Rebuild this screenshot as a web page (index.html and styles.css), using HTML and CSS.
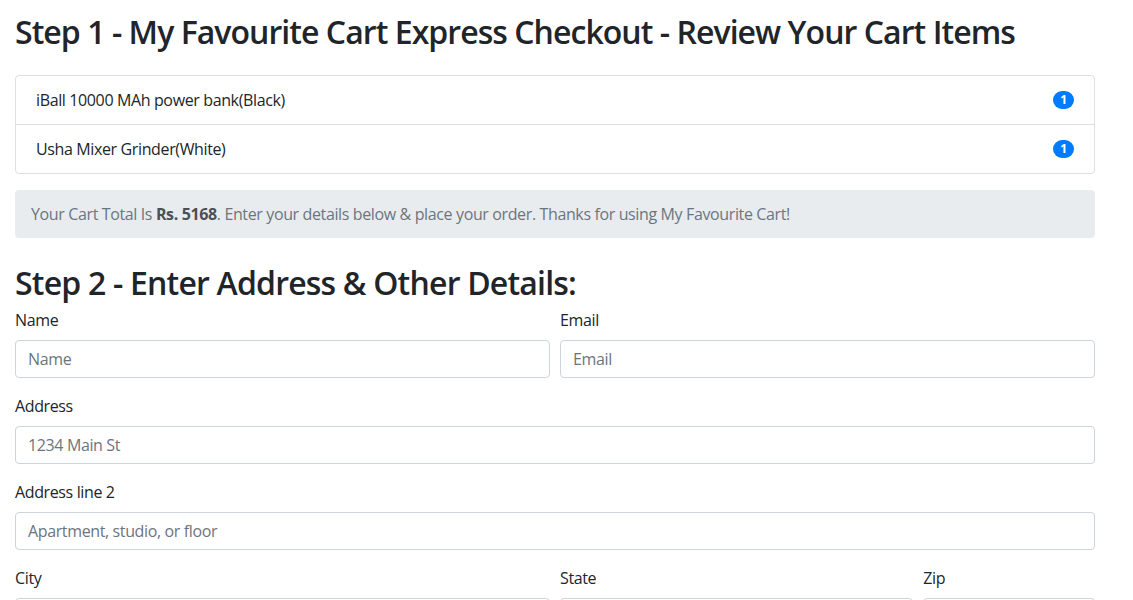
FILE: index.html
```html
<!DOCTYPE html>
<html lang="en">
<head>
<meta charset="utf-8">
<title>My Favourite Cart - Checkout</title>
<link rel="stylesheet" href="styles.css">
</head>
<body>
<div class="container">
  <h2 class="step-title step-one">Step 1 - My Favourite Cart Express Checkout - Review Your Cart Items</h2>
  <ul class="list-group">
    <li class="list-group-item">
      <span>iBall 10000 MAh power bank(Black)</span>
      <span class="badge">1</span>
    </li>
    <li class="list-group-item">
      <span>Usha Mixer Grinder(White)</span>
      <span class="badge">1</span>
    </li>
  </ul>
  <div class="alert">Your Cart Total Is <b>Rs. 5168</b>. Enter your details below &amp; place your order. Thanks for using My Favourite Cart!</div>

  <h2 class="step-title step-two">Step 2 - Enter Address &amp; Other Details:</h2>
  <form class="checkout-form">
    <div class="form-row">
      <div class="form-group col-6">
        <label for="name">Name</label>
        <input class="form-control" id="name" type="text" placeholder="Name">
      </div>
      <div class="form-group col-6">
        <label for="email">Email</label>
        <input class="form-control" id="email" type="email" placeholder="Email">
      </div>
    </div>
    <div class="form-group">
      <label for="address">Address</label>
      <input class="form-control" id="address" type="text" placeholder="1234 Main St">
    </div>
    <div class="form-group">
      <label for="address2">Address line 2</label>
      <input class="form-control" id="address2" type="text" placeholder="Apartment, studio, or floor">
    </div>
    <div class="form-row">
      <div class="form-group col-6">
        <label for="city">City</label>
        <input class="form-control" id="city" type="text">
      </div>
      <div class="form-group col-4">
        <label for="state">State</label>
        <input class="form-control" id="state" type="text">
      </div>
      <div class="form-group col-2">
        <label for="zip">Zip</label>
        <input class="form-control" id="zip" type="text">
      </div>
    </div>
  </form>
</div>
</body>
</html>
```
FILE: styles.css
```css
* { box-sizing: border-box; }
html, body { margin: 0; padding: 0; background: #fff; }
body {
  font-family: "Open Sans", "Noto Sans", "Liberation Sans", sans-serif;
  font-size: 16px;
  line-height: 1.5;
  letter-spacing: -0.37px;
  color: #212529;
}
.container {
  width: 1110px;
  padding: 0 15px;
}
.step-title {
  font-size: 32px;
  font-weight: 600;
  line-height: 1.2;
  letter-spacing: -0.95px;
  margin: 0 0 8px;
  color: #212529;
}
.step-one { margin-top: 13px; margin-bottom: 24px; }
.step-two { margin-top: 26px; margin-bottom: 5px; letter-spacing: -0.8px; }
.list-group {
  list-style: none;
  margin: 0 0 16px;
  padding: 0;
  border: 1px solid rgba(0,0,0,.125);
  border-radius: 4px;
}
.list-group-item {
  display: flex;
  justify-content: space-between;
  align-items: center;
  padding: 12px 20px;
}
.list-group-item + .list-group-item { border-top: 1px solid rgba(0,0,0,.125); }
.badge {
  display: inline-block;
  background: #007bff;
  color: #fff;
  font-size: 12px;
  font-weight: 700;
  line-height: 1;
  letter-spacing: 0;
  padding: 3px 7px;
  border-radius: 10px;
}
.alert {
  background: #e9ecef;
  color: #6c757d;
  padding: 12px 16px;
  border-radius: 4px;
  margin-bottom: 16px;
}
.alert b { color: #495057; font-weight: 700; }
.form-row { display: flex; margin: 0 -5px; }
.form-row > .form-group { padding: 0 5px; }
.col-6 { flex: 0 0 50%; }
.col-4 { flex: 0 0 33.3333%; }
.col-2 { flex: 0 0 16.6667%; }
.form-group { margin-bottom: 16px; }
label { display: block; margin-bottom: 8px; }
.form-control {
  display: block;
  width: 100%;
  height: 38px;
  padding: 6px 12px;
  font: inherit;
  letter-spacing: inherit;
  color: #495057;
  background: #fff;
  border: 1px solid #ced4da;
  border-radius: 4px;
}
.form-control::placeholder { color: #6c757d; opacity: 1; }
```
